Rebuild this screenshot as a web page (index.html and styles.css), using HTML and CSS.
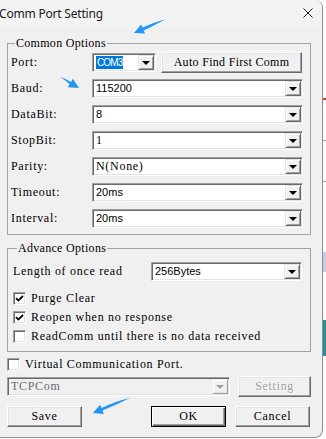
FILE: index.html
```
<!DOCTYPE html>
<html>
<head>
<meta charset="utf-8">
<link rel="stylesheet" href="styles.css">
</head>
<body>
<div class="screen">
  <div class="window">
    <div class="titlebar">
      <span class="title">Comm Port Setting</span>
      <svg class="close" width="10" height="10" viewBox="0 0 10 10"><path d="M0.5 0.5 L9.5 9.5 M9.5 0.5 L0.5 9.5" stroke="#1a1a1a" stroke-width="1" fill="none"/></svg>
    </div>
    <div class="body">
      <fieldset class="group g1">
        <legend>Common Options</legend>
        <div class="rows">
          <div class="row">
            <span class="label">Port:</span>
            <div class="combo port"><span class="value"><span class="sel">COM3</span></span><span class="dd"><i></i></span></div>
            <div class="btn autofind">Auto Find First Comm</div>
          </div>
          <div class="row">
            <span class="label">Baud:</span>
            <div class="combo wide"><span class="value sans">115200</span><span class="dd"><i></i></span></div>
          </div>
          <div class="row">
            <span class="label">DataBit:</span>
            <div class="combo wide"><span class="value sans">8</span><span class="dd"><i></i></span></div>
          </div>
          <div class="row">
            <span class="label">StopBit:</span>
            <div class="combo wide"><span class="value">1</span><span class="dd"><i></i></span></div>
          </div>
          <div class="row">
            <span class="label">Parity:</span>
            <div class="combo wide"><span class="value">N(None)</span><span class="dd"><i></i></span></div>
          </div>
          <div class="row">
            <span class="label">Timeout:</span>
            <div class="combo wide"><span class="value sans">20ms</span><span class="dd"><i></i></span></div>
          </div>
          <div class="row">
            <span class="label">Interval:</span>
            <div class="combo wide"><span class="value sans">20ms</span><span class="dd"><i></i></span></div>
          </div>
        </div>
      </fieldset>

      <fieldset class="group g2">
        <legend>Advance Options</legend>
        <div class="row length">
          <span class="label long">Length of once read</span>
          <div class="combo bytes"><span class="value sans">256Bytes</span><span class="dd"><i></i></span></div>
        </div>
        <div class="checks">
          <div class="check-row"><span class="box"><svg width="9" height="9" viewBox="0 0 9 9"><path d="M1 4.2 L3.4 6.6 L8 2" stroke="#000" stroke-width="1.8" fill="none"/></svg></span><span>Purge Clear</span></div>
          <div class="check-row"><span class="box"><svg width="9" height="9" viewBox="0 0 9 9"><path d="M1 4.2 L3.4 6.6 L8 2" stroke="#000" stroke-width="1.8" fill="none"/></svg></span><span>Reopen when no response</span></div>
          <div class="check-row"><span class="box"></span><span>ReadComm until there is no data received</span></div>
        </div>
      </fieldset>

      <div class="check-row virtual"><span class="box"></span><span>Virtual Communication Port.</span></div>

      <div class="row tcp">
        <div class="combo disabled"><span class="value">TCPCom</span><span class="dd"><i></i></span></div>
        <div class="btn setting">Setting</div>
      </div>

      <div class="row buttons">
        <div class="btn action">Save</div>
        <div class="right-btns">
          <div class="btn action default">OK</div>
          <div class="btn action">Cancel</div>
        </div>
      </div>
    </div>

    <svg class="arrows" width="323" height="438" viewBox="0 0 323 438">
      <path d="M134 33 L141.1 24.4 L142.5 27.6 Q155 22 166 19 Q156 24.5 143.7 30.4 L145.1 33.6 Z" fill="#2196f3"/>
      <path d="M79 88 L67.8 87.3 L69.7 84.1 Q65 80 60 77 Q66 78.8 71 81.9 L72.8 78.7 Z" fill="#2196f3"/>
      <path d="M93 413 L100.1 404.7 L101.5 408.1 Q116 401 130 398 Q117 404.5 102.5 410.5 L103.9 413.9 Z" fill="#2196f3"/>
    </svg>
  </div>
  <div class="behind">
    <div class="mark red"></div>
    <div class="mark grey"></div>
    <div class="mark grey"></div>
    <div class="mark lav"></div>
    <div class="mark teal"></div>
  </div>
</div>
</body>
</html>
```

FILE: styles.css
```
html, body {
  margin: 0;
  padding: 0;
}

body {
  width: 326px;
  height: 439px;
  overflow: hidden;
  background: #ffffff;
  font-family: "Liberation Serif", "Times New Roman", serif;
  font-size: 12px;
  letter-spacing: 0.7px;
  color: #000;
}

.screen {
  display: flex;
  height: 439px;
}

.window {
  position: relative;
  box-sizing: border-box;
  width: 323px;
  height: 438px;
  flex: none;
  background: #f0f0f0;
  border-right: 1px solid #8e8e8e;
  border-bottom: 1px solid #8e8e8e;
  border-radius: 0 8px 8px 0;
  overflow: hidden;
}

.titlebar {
  height: 26px;
  display: flex;
  align-items: center;
  justify-content: space-between;
  padding-right: 9px;
  background: #f3f3f3;
}

.title {
  font-family: "Noto Sans", "Open Sans", sans-serif;
  font-size: 12px;
  letter-spacing: -0.2px;
  color: #1a1a1a;
  margin-left: -1px;
}

.close {
  display: block;
}

.body {
  padding: 11px 11px 0 7px;
  display: flex;
  flex-direction: column;
}

.group {
  margin: 0;
  min-width: 0;
  border: 1px solid #a3a3a3;
}

.group legend {
  padding: 0 1px;
  margin-left: 4px;
  line-height: 12px;
  letter-spacing: 0.3px;
}

.g1 {
  padding: 3px 0 5px 3px;
}

.g2 {
  margin-top: 7px;
  padding: 7px 0 5px 5px;
}

.rows {
  display: flex;
  flex-direction: column;
  gap: 5px;
}

.row {
  display: flex;
  align-items: center;
  height: 21px;
}

.label {
  width: 81px;
  flex: none;
}

.label.long {
  width: 138px;
}

.combo {
  box-sizing: border-box;
  height: 19px;
  display: flex;
  align-items: center;
  background: #fff;
  border: 1px solid;
  border-color: #a0a0a0 #ffffff #ffffff #a0a0a0;
  box-shadow: inset 1px 1px 0 #696969, inset -1px -1px 0 #e3e3e3;
  padding: 1px;
}

.combo.port { width: 64px; }
.combo.wide { width: 211px; }
.combo.bytes { width: 151px; }

.value {
  flex: 1;
  min-width: 0;
  padding-left: 2px;
  white-space: nowrap;
  line-height: 15px;
}

.value.sans {
  font-family: "Liberation Sans", Arial, sans-serif;
  font-size: 11px;
  letter-spacing: 0;
}

.sel {
  display: inline-block;
  background: #0078d7;
  color: #fff;
  font-family: "Liberation Sans", Arial, sans-serif;
  font-size: 10px;
  letter-spacing: -0.9px;
  padding: 0 1px;
  line-height: 13px;
}

.dd {
  box-sizing: border-box;
  width: 16px;
  height: 15px;
  flex: none;
  display: flex;
  align-items: center;
  justify-content: center;
  background: #f0f0f0;
  border: 1px solid;
  border-color: #e3e3e3 #696969 #696969 #e3e3e3;
  box-shadow: inset 1px 1px 0 #fff, inset -1px -1px 0 #a0a0a0;
}

.dd i {
  width: 0;
  height: 0;
  border-left: 4px solid transparent;
  border-right: 4px solid transparent;
  border-top: 4px solid #000;
}

.btn {
  box-sizing: border-box;
  height: 21px;
  display: flex;
  align-items: center;
  justify-content: center;
  background: #f0f0f0;
  border: 1px solid;
  border-color: #ffffff #696969 #696969 #ffffff;
  box-shadow: inset -1px -1px 0 #a0a0a0, inset 1px 1px 0 #e3e3e3;
  white-space: nowrap;
}

.autofind {
  width: 141px;
  margin-left: 5px;
  letter-spacing: 0.3px;
}

.checks {
  margin-top: 7px;
  display: flex;
  flex-direction: column;
  gap: 0;
}

.check-row {
  display: flex;
  align-items: center;
  height: 19px;
  gap: 5px;
}

.box {
  box-sizing: border-box;
  width: 13px;
  height: 13px;
  flex: none;
  display: flex;
  align-items: center;
  justify-content: center;
  background: #fff;
  border: 1px solid;
  border-color: #a0a0a0 #ffffff #ffffff #a0a0a0;
  box-shadow: inset 1px 1px 0 #696969, inset -1px -1px 0 #e3e3e3;
}

.box svg {
  display: block;
}

.virtual {
  margin-top: 3px;
}

.tcp {
  margin-top: 2px;
}

.combo.disabled {
  width: 224px;
  background: #f0f0f0;
  color: #6d6d6d;
}

.combo.disabled .dd {
  border-color: #f0f0f0 #a0a0a0 #a0a0a0 #f0f0f0;
  box-shadow: inset 1px 1px 0 #fff, inset -1px -1px 0 #e3e3e3;
}

.combo.disabled .dd i {
  border-top-color: #a0a0a0;
}

.setting {
  width: 73px;
  margin-left: 8px;
  color: #a0a0a0;
  text-shadow: 1px 1px 0 #fff;
}

.buttons {
  margin-top: 9px;
  justify-content: space-between;
  padding-right: 1px;
}

.right-btns {
  display: flex;
  gap: 9px;
}

.action {
  width: 75px;
}

.action.default {
  border-color: #000;
  box-shadow: inset 1px 1px 0 #fff, inset -1px -1px 0 #696969, inset -2px -2px 0 #a0a0a0;
}

.arrows {
  position: absolute;
  left: 0;
  top: 0;
  pointer-events: none;
}

.behind {
  flex: 1;
  display: flex;
  flex-direction: column;
  background: #fbfbfb;
}

.mark { width: 100%; }
.mark.red { height: 2px; margin-top: 98px; background: #c04040; }
.mark.grey { height: 1px; margin-top: 40px; background: #9a9a9a; }
.mark.lav { height: 20px; margin-top: 70px; background: #c9cbe6; }
.mark.teal { height: 36px; margin-top: 48px; background: #2b8c96; }
```
